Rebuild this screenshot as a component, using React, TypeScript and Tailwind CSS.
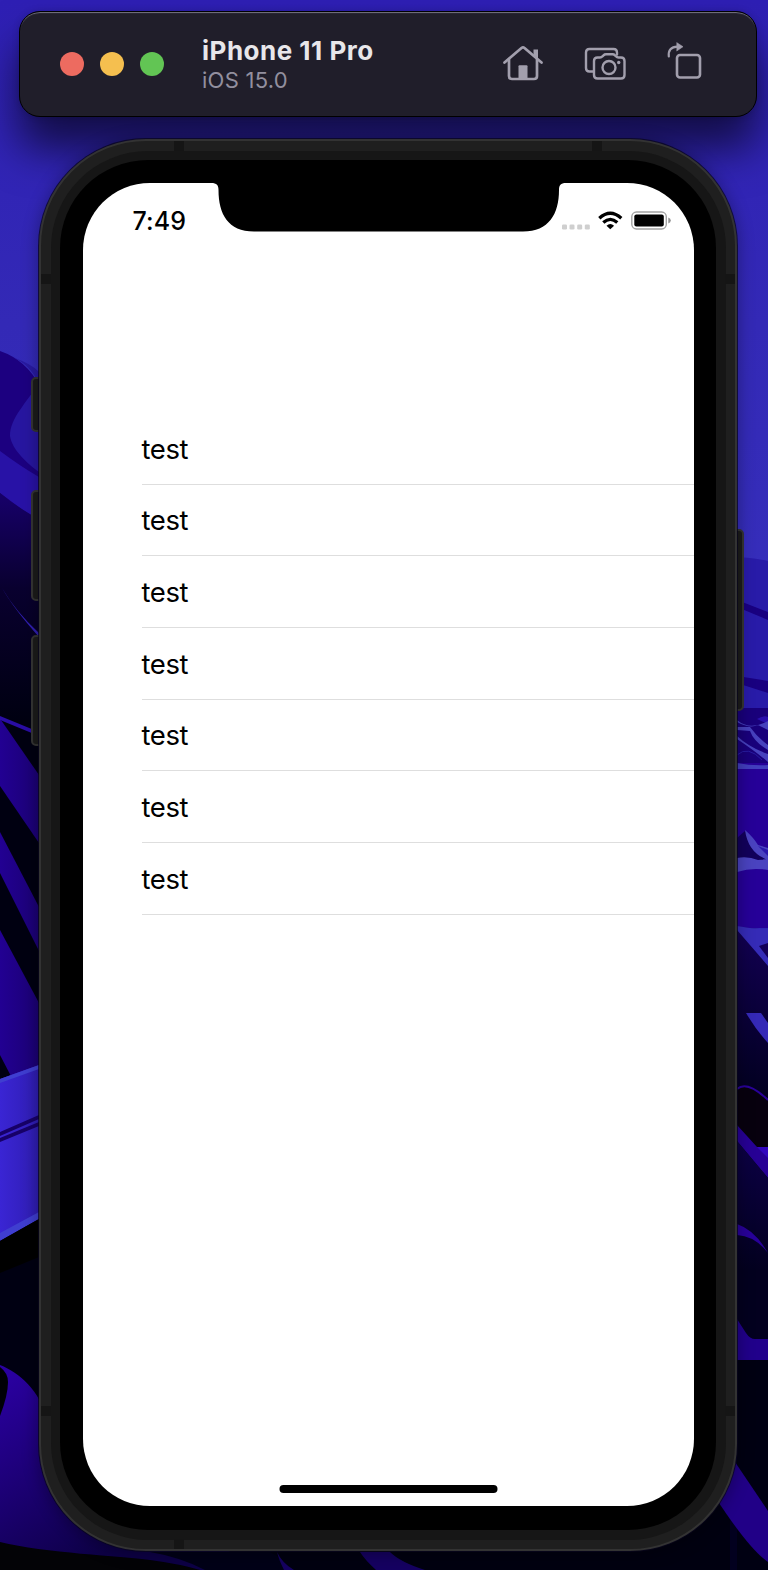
import React from "react";

const rows = ["test", "test", "test", "test", "test", "test", "test"];

function Wallpaper() {
  return (
    <svg className="absolute inset-0" width="768" height="1570" viewBox="0 0 768 1570" aria-hidden="true">
      <defs>
        <linearGradient id="sky" x1="0" y1="0" x2="0" y2="1">
          <stop offset="0" stopColor="#2e1fb4" />
          <stop offset="0.45" stopColor="#3329b6" />
          <stop offset="1" stopColor="#3730bd" />
        </linearGradient>
        <linearGradient id="night" x1="0" y1="500" x2="0" y2="720" gradientUnits="userSpaceOnUse">
          <stop offset="0" stopColor="#160066" />
          <stop offset="0.4" stopColor="#09002f" />
          <stop offset="1" stopColor="#000011" />
        </linearGradient>
        <linearGradient id="violet" x1="0" y1="0" x2="1" y2="0">
          <stop offset="0" stopColor="#220092" />
          <stop offset="1" stopColor="#1b0074" />
        </linearGradient>
        <linearGradient id="beam" x1="0" y1="0" x2="1" y2="0">
          <stop offset="0" stopColor="#3a25d4" />
          <stop offset="1" stopColor="#2f1db2" />
        </linearGradient>
        <linearGradient id="leaf" x1="0" y1="1380" x2="110" y2="1550" gradientUnits="userSpaceOnUse">
          <stop offset="0" stopColor="#2a00a0" />
          <stop offset="1" stopColor="#0d0046" />
        </linearGradient>
        <linearGradient id="deep" x1="0" y1="930" x2="0" y2="1100" gradientUnits="userSpaceOnUse">
          <stop offset="0" stopColor="#120052" />
          <stop offset="1" stopColor="#02001f" />
        </linearGradient>
        <linearGradient id="deep2" x1="0" y1="1140" x2="0" y2="1270" gradientUnits="userSpaceOnUse">
          <stop offset="0" stopColor="#0c0046" />
          <stop offset="1" stopColor="#03001f" />
        </linearGradient>
      </defs>
      <rect width="768" height="720" fill="url(#sky)" />
      <path d="M0 351Q26 360 39 385V520H0Z" fill="#1c0080" />
      <path d="M12 357Q32 364 39 372V384Q30 364 12 357Z" fill="#281aa0" />
      <path d="M39 383C27 402 10 418 10 436C12 450 28 464 39 472Z" fill="#2716a0" />
      <path d="M0 451Q20 466 39 477V522L0 493Z" fill="#2812a6" />
      <path d="M0 493Q18 508 39 519V1100H0Z" fill="url(#night)" />
      <path d="M2 588Q16 612 39 633V637Q14 609 2 588Z" fill="#301fb0" />
      <path d="M0 716L39 732V736L0 720Z" fill="#2a0da5" />
      <path d="M1 720L39 775V843L0 786V720Z" fill="url(#violet)" />
      <path d="M0 832L39 907V951L0 873Z" fill="url(#violet)" />
      <path d="M0 930L39 1003V1080H13L0 1055Z" fill="url(#violet)" />
      <path d="M0 1079L39 1065V1218L0 1241Z" fill="url(#beam)" />
      <path d="M0 1079L39 1065V1069L0 1083ZM0 1233L39 1212V1219L0 1241Z" fill="#3f3ed0" />
      <path d="M0 1132L39 1115V1119L0 1136ZM0 1138L39 1122V1126L0 1142Z" fill="#170068" />
      <path d="M0 1241L39 1219V1570H0Z" fill="#000012" />
      <path d="M0 1241L39 1219V1257L0 1273Z" fill="#000000" />
      <rect x="39" y="1460" width="729" height="110" fill="#000010" />
      <path d="M0 1365C20 1373 39 1390 48 1420L230 1552V1570H0Z" fill="url(#leaf)" />
      <path d="M0 1367Q8 1373 8 1382Q8 1395 0 1416Z" fill="#000006" />
      <path d="M0 1542C45 1553 120 1556 150 1560Q180 1564 200 1570H0Z" fill="#030306" />
      <path d="M150 1552H270Q285 1560 290 1570H205Q180 1557 150 1552Z" fill="#000017" />
      <path d="M277 1552Q282 1563 294 1570H284Q279 1560 277 1552ZM360 1552H390Q400 1562 425 1570H376Q365 1560 360 1552Z" fill="#150061" />

      <path d="M730 557Q750 557 768 561V708H730Z" fill="#281ba8" />
      <path d="M737 600L768 612V620L737 607ZM737 676L768 681V693L737 683Z" fill="#190080" />
      <rect x="730" y="708" width="38" height="60" fill="#19007b" />
      <path d="M757 719Q764 715 768 717V724Z" fill="#2a0fac" />
      <path d="M737 720Q750 731 768 721V730L758 725Q750 729 737 722ZM737 727H750Q757 737 768 745V750Q754 742 750 731L737 730ZM737 736Q750 748 768 754V762Q755 751 737 739Z" fill="#4641bd" />
      <path d="M737 755Q748 745 762 760" fill="none" stroke="#281ca1" />
      <rect x="730" y="763" width="38" height="165" fill="#260098" />
      <path d="M737 763Q752 766 768 765V769H737Z" fill="#423ebe" />
      <path d="M737 838L745 831L768 858V862L737 866Z" fill="#12005b" />
      <path d="M745 830Q754 838 758 845L768 848V860Q748 853 745 830ZM737 858Q748 856 758 860L768 859V870Q752 867 737 872Z" fill="#4a43c0" />
      <path d="M758 846L768 850V856Z" fill="#2a18ac" />
      <path d="M730 926L768 930V1570H730Z" fill="url(#deep)" />
      <path d="M737 926Q752 929 768 929V966L737 930Z" fill="#352bb7" />
      <path d="M759 946L768 943V958Z" fill="#140059" />
      <path d="M746 1013H761L768 1023V1043Q756 1030 746 1013Z" fill="#3529b7" />
      <path d="M737 1089Q747 1080 768 1101V1147H757L737 1126Z" fill="#07000e" />
      <path d="M737 1089Q747 1080 768 1100" fill="none" stroke="#290099" strokeWidth="2" />
      <path d="M737 1125L757 1147H768V1178L737 1141Z" fill="#270095" />
      <path d="M757 1147H768V1158Z" fill="#3206be" />
      <path d="M737 1141L768 1178V1340H750L737 1320Z" fill="url(#deep2)" />
      <path d="M737 1224Q755 1230 768 1253Q755 1236 737 1235Z" fill="#280099" />
      <path d="M737 1319L746 1333Q750 1339 755 1339H768V1360H737Z" fill="#21008b" />
      <rect x="737" y="1360" width="31" height="210" fill="#000012" />
      <path d="M735 1462L768 1511V1562Q750 1550 717 1500Z" fill="#210087" />
    </svg>
  );
}

function Toolbar() {
  return (
    <header className="relative ml-[19px] mt-[11px] flex h-[106px] w-[738px] items-center rounded-[21px] border border-black bg-[#201e2a] pl-10 shadow-[0_32px_44px_0_rgba(0,0,0,0.6),0_0_6px_1px_rgba(0,0,0,0.12),inset_0_2px_1px_-1px_#777582]">
      <div className="flex gap-4">
        <span className="size-6 rounded-full bg-[#ed6b60]" />
        <span className="size-6 rounded-full bg-[#f5bf4f]" />
        <span className="size-6 rounded-full bg-[#62c554]" />
      </div>
      <div className="ml-[38px] flex w-[300px] flex-col pt-px">
        <strong className="text-[26px] font-bold leading-[32px] tracking-[0.5px] text-[#e8e7ea]">iPhone 11 Pro</strong>
        <span className="-mt-px text-[22px] leading-[28px] tracking-[0.25px] text-[#928f9e]">iOS 15.0</span>
      </div>
      <div className="flex gap-[40px] pb-[3px] text-[#a29fad]">
        <svg width="42" height="42" viewBox="0 0 42 42" fill="none" stroke="currentColor" strokeWidth="2.7" strokeLinecap="round" strokeLinejoin="round">
          <path d="M2.5 20.5L19.5 6Q21 4.800 22.500 6L39.500 20.500" />
          <path d="M7 17.500V34Q7 37 10 37H32Q35 37 35 34V17.500" />
          <path d="M31.500 7.500H36V18L31.500 14Z" fill="currentColor" stroke="none" />
          <path d="M16.500 37V24.200Q16.500 23.200 17.500 23.200H24.500Q25.500 23.200 25.500 24.200V37Z" fill="currentColor" stroke="none" />
        </svg>
        <svg width="42" height="42" viewBox="0 0 42 42" fill="none" stroke="currentColor" strokeWidth="2.400" strokeLinecap="round" strokeLinejoin="round">
          <path d="M9 29.500H5.500Q2 29.500 2 26V10.500Q2 7 5.500 7H29.500Q33 7 33 10.500V12.500" />
          <path d="M13.500 15.500H16Q17.500 15.500 18.500 14.300L19.500 13.300Q20.500 12.300 22 12.300H28.500Q30 12.300 31 13.300L32 14.300Q33 15.500 34.500 15.500H37Q40.500 15.500 40.500 19V33Q40.500 36.500 37 36.500H13.500Q10 36.500 10 33V19Q10 15.500 13.500 15.500Z" />
          <circle cx="25" cy="25.500" r="6.500" />
          <circle cx="34.700" cy="20.500" r="1.700" fill="currentColor" stroke="none" />
        </svg>
        <svg width="42" height="42" viewBox="0 0 42 42" fill="none" stroke="currentColor" strokeLinecap="round" strokeLinejoin="round">
          <rect x="11" y="13" width="23" height="22.500" rx="3" strokeWidth="2.600" />
          <path d="M2.800 14.500Q1.800 5 11.500 4.700" strokeWidth="2.200" />
          <path d="M11 0.800L17 4.700L11 8.800Z" fill="currentColor" strokeWidth="0.600" />
        </svg>
      </div>
    </header>
  );
}

function StatusBar() {
  return (
    <div className="flex h-[74px] items-start pl-[50px] pt-[22px]">
      <time className="w-[428px] text-[25px] font-medium leading-[32px] tracking-[0.1px]">7:49</time>
      <svg width="112" height="30" viewBox="0 0 112 30">
        <g fill="#cfcfcf">
          <rect x="1" y="19.500" width="5" height="5" rx="1.300" />
          <rect x="8.500" y="19.500" width="5" height="5" rx="1.300" />
          <rect x="16.200" y="19.500" width="5" height="5" rx="1.300" />
          <rect x="23.800" y="19.500" width="5" height="5" rx="1.300" />
        </g>
        <g fill="none" stroke="#000" strokeWidth="3.300">
          <path d="M38.300 13.200Q49.300 3.200 60.300 13.200" />
          <path d="M42.300 17.500Q49.300 11.200 56.300 17.500" />
        </g>
        <path d="M49.300 24.300L45.500 20.700Q49.300 17.300 53.100 20.700Z" />
        <rect x="70.800" y="7" width="34.500" height="17" rx="4.700" fill="none" stroke="#a2a2a2" strokeWidth="1.400" />
        <rect x="73.300" y="9.500" width="29.500" height="12" rx="2" />
        <path d="M107.300 12.500Q109.800 13.500 109.800 15.500Q109.800 17.500 107.300 18.500Z" fill="#929292" />
      </svg>
    </div>
  );
}

function Screen() {
  return (
    <main className="relative flex h-[1323px] w-[611px] flex-col overflow-hidden rounded-[67px] bg-white text-black">
      <svg className="absolute left-[128px] top-0" width="356" height="49" viewBox="0 0 356 49">
        <path d="M0 0C6 0 7.500 2.500 7.500 7C7.500 31 17 48.500 43 48.500H312C338 48.500 348 31 348 7C348 2.500 349.500 0 355 0Z" />
      </svg>
      <StatusBar />
      <ul className="ml-[59px] mt-[156.600px] flex flex-col">
        {rows.map((label, index) => (
          <li key={index} className="flex h-[71.670px] items-center border-b border-[#dedede] pt-[0.500px] text-[27.500px] leading-[34px] tracking-[-0.400px]">
            {label}
          </li>
        ))}
      </ul>
      <div className="mb-[13px] mt-auto h-2 w-[218px] translate-x-[0.5px] self-center rounded-full bg-black" />
    </main>
  );
}

function Phone() {
  return (
    <section className="relative ml-[39px] mt-[22px] h-[1412px] w-[698px]">
      <i className="absolute -left-[8px] top-[238px] h-[55px] w-[10px] rounded-l-[5px] border-2 border-[#353534] bg-[#1c1c1b]" />
      <i className="absolute -left-[8px] top-[351px] h-[111px] w-[10px] rounded-l-[5px] border-2 border-[#353534] bg-[#1c1c1b]" />
      <i className="absolute -left-[8px] top-[496px] h-[111px] w-[10px] rounded-l-[5px] border-2 border-[#353534] bg-[#1c1c1b]" />
      <i className="absolute -right-[7px] top-[390px] h-[182px] w-[9px] rounded-r-[5px] border-2 border-[#353534] bg-[#1c1c1b]" />
      <div className="relative size-full rounded-[107px] border-2 border-[#333333] bg-[#1f1f1f] p-[9.500px] shadow-[0_0_0_1px_rgba(8,6,28,0.75),0_2px_16px_2px_rgba(0,0,0,0.3)]">
        <i className="absolute left-[133px] top-0 h-[10px] w-[10px] bg-[#151515]" />
        <i className="absolute left-[551px] top-0 h-[10px] w-[10px] bg-[#151515]" />
        <i className="absolute left-0 top-[133px] h-[10px] w-[10px] bg-[#151515]" />
        <i className="absolute right-0 top-[133px] h-[10px] w-[10px] bg-[#151515]" />
        <i className="absolute left-0 top-[1265px] h-[10px] w-[10px] bg-[#151515]" />
        <i className="absolute right-0 top-[1265px] h-[10px] w-[10px] bg-[#151515]" />
        <i className="absolute bottom-0 left-[133px] h-[10px] w-[10px] bg-[#151515]" />
        <div className="size-full rounded-[97px] bg-[#161616] p-[9.500px]">
          <div className="flex size-full items-start justify-center rounded-[88px] bg-black pt-[22.500px]">
            <Screen />
          </div>
        </div>
      </div>
    </section>
  );
}

export default function App() {
  return (
    <div className="relative flex h-[1570px] w-[768px] flex-col overflow-hidden bg-[#3028b4] font-['Inter',sans-serif]">
      <Wallpaper />
      <Toolbar />
      <Phone />
    </div>
  );
}
